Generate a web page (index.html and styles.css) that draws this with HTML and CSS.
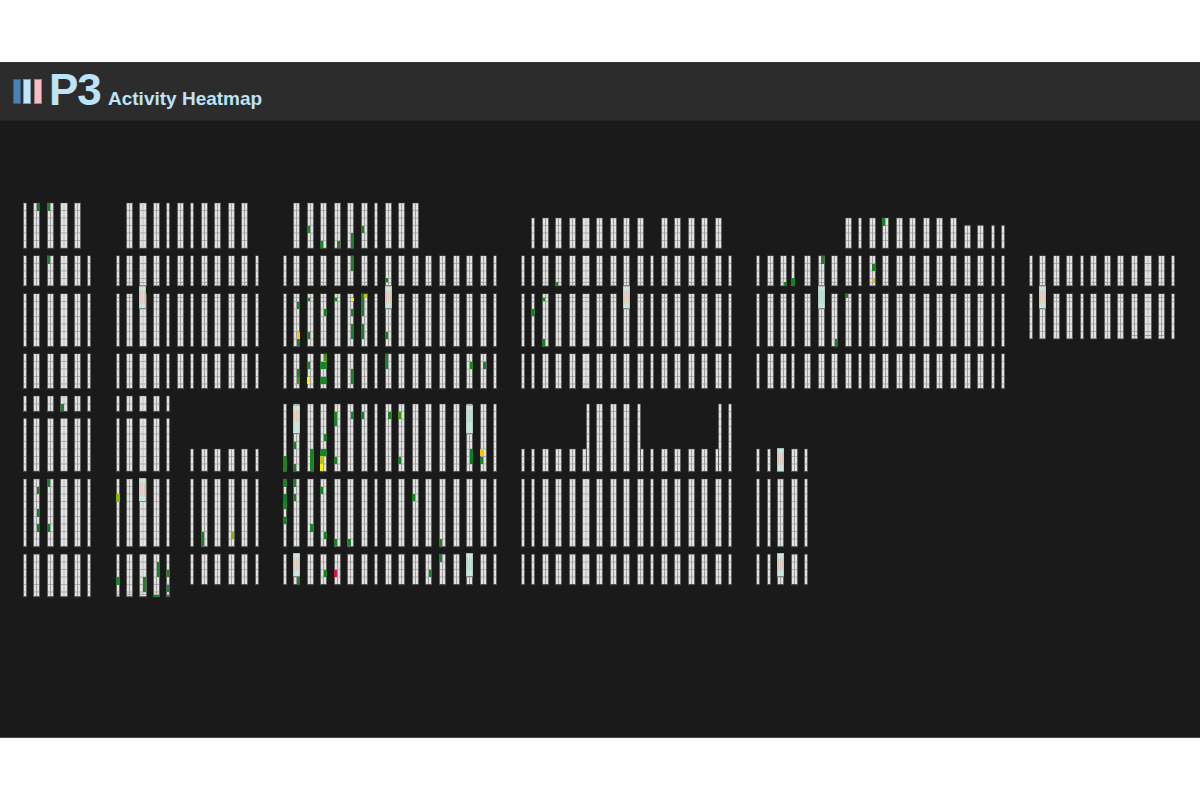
FILE: index.html
```
<!DOCTYPE html>
<html lang="en">
<head>
<meta charset="utf-8">
<title>P3 Activity Heatmap</title>
<link rel="stylesheet" href="styles.css">
</head>
<body>
<div class="app">
  <header class="topbar">
    <div class="logo"><span class="bar bar-blue"></span><span class="bar bar-light"></span><span class="bar bar-pink"></span></div>
    <h1 class="brand">P3</h1>
    <h2 class="title">Activity Heatmap</h2>
  </header>
  <main class="map">
    <svg id="floor" class="floor" width="1200" height="616" viewBox="0 121 1200 616"></svg>
  </main>
</div>
<script src="map.js"></script>
</body>
</html>
```
FILE: styles.css
```
body { margin: 0; background: #fff; font-family: "Liberation Sans", Arial, sans-serif; }
.app { margin-top: 62px; height: 676px; display: flex; flex-direction: column; background: #1a1a1a; box-sizing: border-box; border-bottom: 1px solid #4a4a4a; overflow: hidden; }
.topbar { height: 59px; flex: none; box-sizing: border-box; display: flex; align-items: baseline; padding: 0 13px; background: #2c2c2c; border-top: 1px solid #383838; border-bottom: 1px solid #232323; color: #bde3f8; }
.logo { display: flex; gap: 2px; width: 36px; align-self: flex-start; padding-top: 16px; }
.bar { box-sizing: border-box; width: 8px; height: 25px; flex: none; border: 1px solid rgba(40, 40, 40, .4); }
.bar-blue { background: #4682b4; }
.bar-light { background: #bfe6fa; }
.bar-pink { background: #f9bcc6; margin-left: 1px; }
.brand { margin: 0; width: 53px; font-size: 44px; line-height: 54px; font-weight: bold; letter-spacing: -1px; }
.title { margin: 0 0 0 6px; font-size: 19px; line-height: 22px; font-weight: bold; }
.map { flex: 1; min-height: 0; }
.floor { display: block; }
.edge { fill: #626262; }
.cell { fill: #e2e2e2; }
.halo { fill: #262626; }
.spine { fill: #a0a0a0; }
.soft { fill: #d0d0d0; }
.rule { fill: #a0a0a0; }
.station { fill: #c8e6dc; }
.station-edge { fill: #a9bdb5; }
.station-cap { fill: #7b8782; }
.lane { fill: #d9c8bc; }
```
FILE: map.js
```
// Rack columns: left edge and kind (s = single, d = double, e = wide double)
const A = "s23 d33 d47 e60 d74 s87", B1 = "s116 d126 e139 d153 s166";
const B2 = "s190 d201 d214 d228 d241 s255";
const B = B1 + " d177 " + B2;
const C = "s283 d293 d307 d320 d334 d347 d361 s374 d385 d398 d412 d425 d439 d453 d466 d480 s493";
const D = "s521 s531 d542 d555 d569 e582 d596 d610 d623 d637 s650 d661 d674 d688 d701 d715 s728";
const E = "s756 d767 d780 s791 d804 d818 d831 d845 s858 d869 d882 d896 d909 d923 d936 d950 d964 d977 s991 s1001";
const E2 = "s756 s767 d777 d791 s804";
const F = "s1029 d1039 d1053 d1066 s1080 d1090 d1104 d1117 d1131 e1144 d1158 s1171";
const steps = (from, count) => Array.from({ length: count }, (_, i) => from + i * 7.5);

// Aisle bands: columns, top, bottom, shelf lines
const bands = [
  ["s23 d33 d47 e60 d74", 203, 248.5, steps(210.5, 5)],
  ["d126 e139 d153 s166 d177 s190 d201 d214 d228 d241", 203, 248.5, steps(210.5, 5)],
  ["d293 d307 d320 d334 d347 d361 s374 d385 d398 d412", 203, 248.5, steps(210.5, 5)],
  ["s531 d542 d555 d569 e582 d596 d610 d623 d637 d661 d674 d688 d701 d715", 218, 248.5, steps(225.5, 3)],
  ["d845 s858 d869 d882 d896 d909 d923 d936 d950", 218, 248.5, steps(225.5, 3)],
  ["d964 d977 s991 s1001", 225.5, 248.5, steps(233.3, 2)],
  [A, 255.7, 286, [263.5, 270.9, 278.5]],
  [[B, C, D, E, F].join(" "), 255.7, 286, [263.5, 270.9, 278.5, 282.4]],
  [A, 293.7, 346.7, steps(301.5, 6)],
  [[B, C, D, E].join(" "), 293.7, 346.7, [297.5, ...steps(301.5, 6)]],
  [F, 293.7, 339, [297.5, ...steps(301.5, 5)]],
  ["d1131 e1144 d1158", 335, 336, []],
  [[A, B, C, D, E].join(" "), 353.7, 388.7, steps(361.5, 4)],
  [A + " " + B1, 396, 411.6, [404]],
  [A + " " + B1, 418.5, 471.5, steps(426.5, 6)],
  [B2, 449, 471.5, [456.5, 464]],
  [C, 404, 471.7, steps(411.5, 8)],
  [D, 449, 471.7, [456.5, 464]],
  ["s586 d596 d610 d623 s637 s718 s728", 404, 471.7, steps(411.5, 8)],
  [E2, 449, 471.7, [456.5, 464]],
  [[A, B1, B2, C, D, E2].join(" "), 479, 546.8, steps(486.5, 8)],
  [A, 554.3, 596.8, steps(562, 5)],
  [B1, 554.3, 596.8, [...steps(562, 5), 594.5]],
  [[B2, C, D, E2].join(" "), 554.3, 584.7, steps(562, 3)]
];

const G = "#1b8228", K = "#058026", O = "#83b800", M = "#479408", Y = "#fff200", L = "#bcc90a", A1 = "#fcc700";
// Active slots: x, y, height, colour, width
const slots = [
  [37,203,8,K],[47,203,8],[47,256,8],
  [61,404,7],[37,487,7],[47,479,8],[37,509,8],[37,524,8,K],[47,524,8,K],
  [116,494,8,O],[201,532,14],[231,532,7,O],[116,577,8],[143,577,15],[157,562,15],
  [167,570,7],[167,585,7],[167,595,2],[153,595,2,G,7],
  [307,226,7],[320,241,7],[337,241,7],[351,233,15],[361,226,7],[351,256,15],[385,278,4],
  [297,302,7],[297,332,7,A1],[297,339,7],[307,298,3],[307,332,7],[324,309,7],[334,298,3],
  [351,298,3,Y],[351,309,7],[351,324,15],[361,294,22],[364,294,4,L],[361,324,15],[385,332,7],
  [297,369,8],[297,377,7,M],[307,362,7],[307,377,7,Y],[324,354,7,M],[320,362,7,G,7],[320,377,7,G,7],
  [351,369,15],[385,354,15],[470,362,7],[483,362,7],
  [283,456,15],[293,442,7],[293,464,7],[310,449,22],[320,449,7,G,7],[320,456,8,L],[320,464,7,Y],
  [324,434,7],[334,412,14],[334,457,7],[351,412,7],[361,412,7],[388,412,7],[398,412,7,M],[398,457,7],
  [470,449,15,K],[480,449,7,A1,4],[480,457,7],
  [283,479,8],[283,494,8,K],[283,502,7],[283,517,7],[293,479,8],[293,494,7],[320,487,7],[310,524,8],
  [324,532,7],[334,539,7],[348,539,7],[412,494,7],[439,539,7],
  [297,577,7],[324,570,7],[334,570,7,"#d4163c"],[429,570,7],[439,554,8],
  [555,282,4],[542,298,3],[531,309,7],[542,339,7],
  [784,282,4],[791,278,8],[821,256,8],[882,218,8],[872,264,7],[872,279,3,"#ffb400"],[845,294,4],[835,339,7]
];
const singles = [116, 283, 531, 791];
// Pick stations: x, y, height
const stations = [[139,286,22],[139,478,23],[385,286,22],[293,405,28],[466,405,28],[293,553,23],[466,553,23],
  [623,286,22],[777,448,23],[777,553,23],[818,286,22],[1039,286,22]];

const out = [];
const box = (cls, x, y, w, h, fill) =>
  out.push(`<rect class="${cls}" x="${x}" y="${y}" width="${w}" height="${h}"${fill ? ` fill="${fill}"` : ""}/>`);

for (const [cols, top, bottom, lines] of bands) {
  for (const col of cols.split(" ")) {
    const kind = col[0], x = +col.slice(1);
    const w = { s: 4, d: 7, e: 8 }[kind];
    if (bottom - top < 2) { box("rule", x + 1, top, w - 2, 1); continue; }
    box("halo", x, top - 1, w, bottom - top + 2);
    box("edge", x, top, w, bottom - top);
    box("cell", x + 1, top + 0.3, w - 2, bottom - top - 1);
    if (kind === "d") box("spine", x + 3, top + 0.3, 1, bottom - top - 1);
    if (kind === "e") box("soft", x + 3, top + 0.3, 2, bottom - top - 1);
    for (const y of lines) box("rule", x + 1, y - 0.4, w - 2, 0.8);
  }
}
for (const [x, y, h, fill = G, w = singles.includes(x) ? 4 : 3] of slots) box("slot", x, y, w, h, fill);
for (const [x, y, h] of stations) {
  box("station-edge", x, y, 7, h);
  box("station", x + 0.6, y + 1, 5.8, h - 1);
  box("station-cap", x, y + h, 7, 1);
  box("lane", x + 1, y + 5, 1, 12);
  box("lane", x + 3, y + 4, 1, 14);
  box("lane", x + 5, y + 5, 1, 12);
}
document.getElementById("floor").innerHTML = out.join("");
```
